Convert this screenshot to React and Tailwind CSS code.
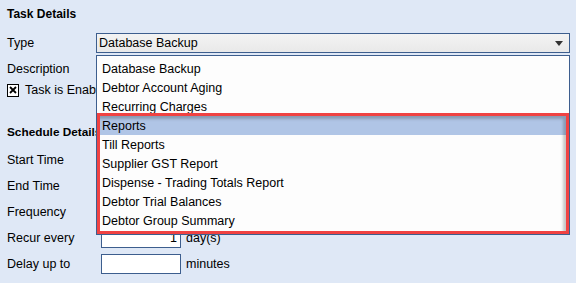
const taskTypes = [
  "Database Backup",
  "Debtor Account Aging",
  "Recurring Charges",
  "Reports",
  "Till Reports",
  "Supplier GST Report",
  "Dispense - Trading Totals Report",
  "Debtor Trial Balances",
  "Debtor Group Summary",
];

function Row({ label, className = "", children }) {
  return (
    <div className={`flex items-center h-[20px] ${className}`}>
      <span className="w-[89px] shrink-0">{label}</span>
      {children}
    </div>
  );
}

function TextBox({ value = "", right = false }) {
  return (
    <div
      className={`ml-[5px] w-[80px] h-[20px] bg-white border border-[#3d5e8e] flex items-center px-[3px] ${
        right ? "justify-end" : ""
      }`}
    >
      {value}
    </div>
  );
}

export default function App() {
  return (
    <div className="relative w-[576px] h-[283px] overflow-hidden bg-[#dfe8f6] text-[12.5px] leading-[16px] text-black font-['Liberation_Sans',Arial,sans-serif]">
      <div className="flex flex-col pl-[7px]">
        <h3 className="font-bold mt-[6px] h-[16px] text-[12px]">Task Details</h3>

        <Row label="Type" className="mt-[11px]">
          <div className="flex-1 mr-[6px] h-[20px] border border-[#3d5e8e] bg-gradient-to-b from-[#f3f3f3] to-[#e9e9e9] flex items-center justify-between pl-[2px] pr-[6px]">
            <span>Database Backup</span>
            <svg width="8" height="5" viewBox="0 0 8 5">
              <path d="M0 0H8L4 5Z" fill="#333" />
            </svg>
          </div>
        </Row>

        <Row label="Description" className="mt-[6px]">
          <div className="flex-1 mr-[6px] h-[20px] bg-white border border-[#3d5e8e]" />
        </Row>

        <div className="flex items-center h-[20px] mt-[1px]">
          <span className="w-[12px] h-[13px] border border-black bg-white flex items-center justify-center">
            <svg width="8" height="8" viewBox="0 0 8 8">
              <path d="M1 1L7 7M7 1L1 7" stroke="#000" strokeWidth="1.8" />
            </svg>
          </span>
          <span className="ml-[6px]">Task is Enabled</span>
        </div>

        <h3 className="font-bold mt-[22px] h-[20px] flex items-center text-[11.8px]">Schedule Details</h3>

        <Row label="Start Time" className="mt-[8px]">
          <TextBox />
        </Row>
        <Row label="End Time" className="mt-[6px]">
          <TextBox />
        </Row>
        <Row label="Frequency" className="mt-[6px]">
          <TextBox />
        </Row>
        <Row label="Recur every" className="mt-[6px]">
          <TextBox value="1" right />
          <span className="ml-[5px]">day(s)</span>
        </Row>
        <Row label="Delay up to" className="mt-[6px]">
          <TextBox />
          <span className="ml-[5px]">minutes</span>
        </Row>
      </div>

      {/* open combo list */}
      <div className="absolute left-[96px] top-[55px] w-[474px] border border-[#3d5e8e] bg-[#fdfdfd] pt-[3px] pb-[4px]">
        {taskTypes.map((t) => (
          <div
            key={t}
            className={`h-[19px] flex items-center pl-[5px] ${t === "Reports" ? "bg-[#b0c5e6]" : ""}`}
          >
            {t}
          </div>
        ))}
        <div className="absolute left-0 right-0 bottom-0 top-[57px] border-[3px] border-[#f04242] shadow-[inset_-3px_3px_3px_rgba(0,0,0,0.22)]" />
      </div>
    </div>
  );
}
